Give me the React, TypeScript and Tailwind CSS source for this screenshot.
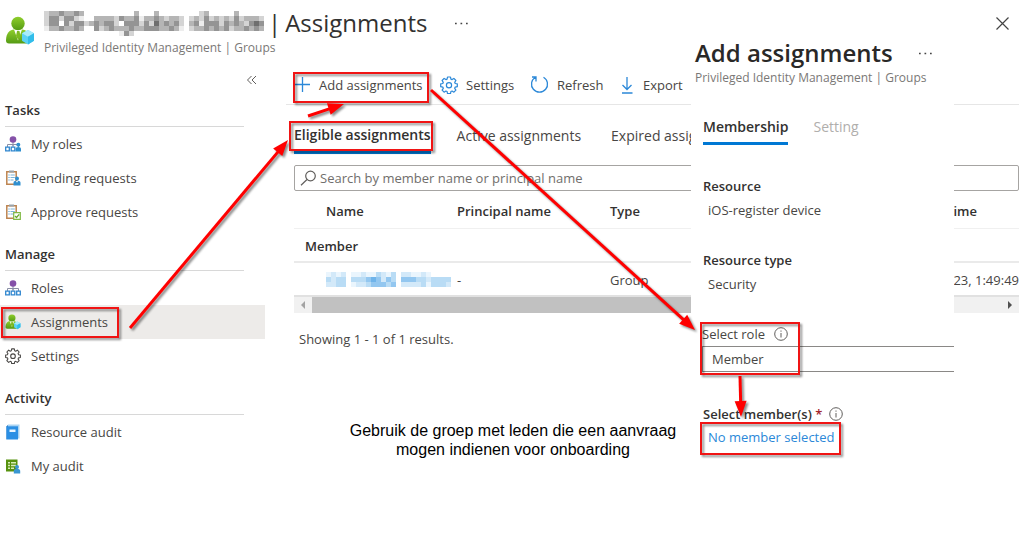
import type { ReactNode } from "react";

const GREYS = ["", "#ededed", "#d4d4d4", "#b5b5b5", "#949494", "#6e6e6e"];
const BLUES = ["", "#eaf5fd", "#d3e9f9", "#b9dcf5", "#93c7f0", "#6fb4ea"];

// One digit per cell, 0 = empty, 5 = darkest
const TITLE_ROWS = [
  "23343343000000000030003000000002300000300000",
  "24424421003333243341334323320232423232423332",
  "24404244234344204442425343420341444243432454",
  "13343343004234333433444334310233434342334343",
  "00000000000000014200000000000000000000000000",
];
const NAME_ROWS = [
  "1212011211321302211210000",
  "3233033345424304443323333",
  "2233012234443402222313332",
];

function Mosaic({ rows, cell, colors, label }: { rows: string[]; cell: number; colors: string[]; label: string }) {
  const width = rows[0].length * cell;
  return (
    <svg width={width} height={rows.length * cell} role="img" aria-label={label} shapeRendering="crispEdges">
      {rows.map((row, y) =>
        row.split("").map((level, x) =>
          level === "0" ? null : (
            <rect key={`${x}-${y}`} x={x * cell} y={y * cell} width={cell} height={cell} fill={colors[Number(level)]} />
          )
        )
      )}
    </svg>
  );
}

function PersonIcon({ size }: { size: number }) {
  return (
    <svg width={size} height={size} viewBox="0 0 30 30">
      <defs>
        <linearGradient id="person" x1="0" y1="0" x2="0" y2="1">
          <stop offset="0" stopColor="#8fce2c" />
          <stop offset="1" stopColor="#559b14" />
        </linearGradient>
      </defs>
      <path d="M1 24.500C1 17 5 13.500 9 13.500h8c4.500 0 8 4 8 11 0 2-1 3-3 3H4c-2 0-3-1-3-3z" fill="url(#person)" />
      <path d="M9 13.500h8l-4 11z" fill="#fff" />
      <path d="M12 15h2.500l1 5-2.200 4-2.300-4z" fill="#7dba20" />
      <circle cx="13" cy="7.500" r="6.700" fill="url(#person)" />
      <path d="M23 14l6 3.200v7.600L23 28.500l-6-3.700v-7.600z" fill="#5bd3f5" />
      <path d="M23 14l6 3.200-6 3.600-6-3.600z" fill="#a8ecfc" />
      <path d="M23 20.800l6-3.600v7.600l-6 3.700z" fill="#32bdea" />
    </svg>
  );
}

function RolesIcon({ person = false }: { person?: boolean }) {
  return (
    <svg width="16" height="16" viewBox="0 0 16 16" fill="none">
      <path d="M8 6v4M2.500 11V8.500h11V11M8 8.500V11" stroke="#8a8fa6" />
      <circle cx="8" cy="3.500" r="3.300" fill="#8551a8" />
      <path d="M.7 11.200h3.600v3.600H.7zM6.200 11.200h3.600v3.600H6.200z" stroke="#2f86cf" strokeWidth="1.300" fill="#fff" />
      {person ? (
        <>
          <circle cx="13.300" cy="8.700" r="2" fill="#2f8fcf" />
          <path d="M10.500 15.500v-2.600c0-1.300 1-2 2.800-2s2.700.7 2.700 2v2.600z" fill="#2f8fcf" />
        </>
      ) : (
        <path d="M11.700 11.200h3.600v3.600h-3.600z" stroke="#2f86cf" strokeWidth="1.300" fill="#fff" />
      )}
    </svg>
  );
}

function ClipboardIcon({ approved = false }: { approved?: boolean }) {
  return (
    <svg width="16" height="16" viewBox="0 0 16 16" fill="none">
      <path d="M1.800 1.700h9.400v12.600H1.800z" fill="#fff" stroke="#bd8450" strokeWidth="1.500" />
      <path d="M4 .5h5v2H4z" fill="#9aa3aa" />
      <path d="M3.500 5h1M3.500 7.500h1M3.500 10h1" stroke="#3c93d0" strokeWidth="1.200" />
      <path d="M5.500 5h4.300M5.500 7.500h4.300M5.500 10h3" stroke="#7db4da" strokeWidth="1.200" />
      {approved ? (
        <>
          <path d="M8.700 8.700h6.600v6.600H8.700z" fill="#fff" stroke="#7fb843" strokeWidth="1.200" />
          <path d="M10 12l1.500 1.500 2.700-3.200" stroke="#6aa82c" strokeWidth="1.300" />
        </>
      ) : (
        <>
          <circle cx="12" cy="8.500" r="2" fill="#2f8fcf" />
          <path d="M8.500 15.500v-2.700c0-1.400 1.200-2 3.500-2s3.500.6 3.500 2v2.700z" fill="#2f8fcf" />
          <path d="M11 11l1 1.800 1-1.800z" fill="#fff" />
        </>
      )}
    </svg>
  );
}

function BookIcon() {
  return (
    <svg width="16" height="16" viewBox="0 0 16 16">
      <path d="M3 .5h11.500v14H3z" fill="#a9d3f2" />
      <path d="M1.500 2.500 3 .7V14l-1.500 1.500z" fill="#1c72bd" />
      <path d="M1.500 2.300h11.500v13.200H1.500z" fill="#2b8fe4" />
      <path d="M4.500 5.500h6V8h-6z" fill="#e9f5ff" />
    </svg>
  );
}

function AuditIcon() {
  return (
    <svg width="16" height="16" viewBox="0 0 16 16">
      <path d="M1 1.500h11.500v12H1z" fill="#57920f" />
      <path d="M3 4h2v1.500H3zM6 4h5v1.500H6zM3 6.800h2v1.500H3zM6 6.800h5v1.500H6zM3 9.600h2v1.500H3zM6 9.600h3v1.500H6z" fill="#d8ecb8" />
      <circle cx="12" cy="9" r="2" fill="#3a96d2" />
      <path d="M8.800 15.500v-2.600c0-1.400 1-2 3.200-2s3.200.6 3.200 2v2.600z" fill="#3a96d2" />
    </svg>
  );
}

function GearIcon({ size }: { size: number }) {
  return (
    <svg width={size} height={size} viewBox="0 0 18 18" fill="none" stroke="currentColor" strokeWidth="1.200" strokeLinejoin="round">
      <path d="M7.500 1h3l.4 2.100 1.200.5 1.800-1.200 2 2.100-1.200 1.800.5 1.200 2.100.4v2.800l-2.100.4-.5 1.200 1.200 1.800-2 2.100-1.800-1.200-1.200.5-.4 2.100h-3l-.4-2.100-1.200-.5-1.800 1.200-2-2.100 1.200-1.800-.5-1.200L.7 10.700V7.900l2.100-.4.5-1.200-1.200-1.800 2-2.100 1.800 1.200 1.200-.5z" />
      <circle cx="9" cy="9.200" r="2.600" />
    </svg>
  );
}

function InfoIcon() {
  return (
    <svg width="14" height="14" viewBox="0 0 14 14" fill="none" stroke="#605e5c">
      <circle cx="7" cy="7" r="6.300" />
      <path d="M7 6v4.500M7 3.500v1.200" />
    </svg>
  );
}

function Dots() {
  return (
    <svg width="13" height="3" viewBox="0 0 13 3" fill="#444">
      <path d="M0 .7h1.700v1.600H0zM5.500.7h1.700v1.600H5.500zM11 .7h1.700v1.600H11z" />
    </svg>
  );
}

function Arrow({ x1, y1, x2, y2 }: { x1: number; y1: number; x2: number; y2: number }) {
  const length = Math.hypot(x2 - x1, y2 - y1);
  const angle = (Math.atan2(y2 - y1, x2 - x1) * 180) / Math.PI;
  return (
    <g transform={`translate(${x1} ${y1}) rotate(${angle})`}>
      <path d={`M0 0H${length - 10}`} stroke="#f00" strokeWidth="3" />
      <path d={`M${length} 0l-16-6v12z`} fill="#f00" />
    </g>
  );
}

function Annotations() {
  return (
    <svg className="absolute top-0 left-0 pointer-events-none" width="1024" height="555" viewBox="0 0 1024 555" aria-hidden="true">
      <g fill="none" className="drop-shadow-[2px_2px_1px_rgba(0,0,0,0.45)]">
        <g stroke="#f01414" strokeWidth="2">
          <rect x="294" y="73" width="134" height="29" />
          <rect x="290" y="122" width="142" height="28" />
          <rect x="2" y="308" width="116" height="29" />
          <rect x="701" y="323" width="98" height="51" />
          <rect x="701" y="423" width="139" height="31" />
        </g>
        <Arrow x1={130} y1={328} x2={288} y2={140} />
        <Arrow x1={308} y1={116} x2={344} y2={104} />
        <Arrow x1={431} y1={90} x2={695} y2={330} />
        <Arrow x1={740} y1={376} x2={741} y2={417} />
      </g>
    </svg>
  );
}

const sections: { title: string; items: { label: string; icon: ReactNode; active?: boolean }[] }[] = [
  {
    title: "Tasks",
    items: [
      { label: "My roles", icon: <RolesIcon person /> },
      { label: "Pending requests", icon: <ClipboardIcon /> },
      { label: "Approve requests", icon: <ClipboardIcon approved /> },
    ],
  },
  {
    title: "Manage",
    items: [
      { label: "Roles", icon: <RolesIcon /> },
      { label: "Assignments", icon: <PersonIcon size={16} />, active: true },
      { label: "Settings", icon: <GearIcon size={16} /> },
    ],
  },
  {
    title: "Activity",
    items: [
      { label: "Resource audit", icon: <BookIcon /> },
      { label: "My audit", icon: <AuditIcon /> },
    ],
  },
];

function Sidebar() {
  return (
    <nav className="w-[265px] shrink-0">
      <div className="flex h-5 items-end justify-end pr-2">
        <button aria-label="Collapse menu" className="text-[#605e5c]">
          <svg width="10" height="10" viewBox="0 0 10 10" fill="none" stroke="currentColor">
            <path d="M4.500 1l-4 4 4 4M9 1L5 5l4 4" />
          </svg>
        </button>
      </div>
      {sections.map((section) => (
        <div key={section.title}>
          <h2 className="mr-[21px] ml-[5px] flex h-[42px] items-center border-b border-[#d8d8d8] pt-2 font-semibold">
            {section.title}
          </h2>
          <ul>
            {section.items.map((item) => (
              <li key={item.label}>
                <a
                  href="#"
                  className={`flex h-[34px] items-center gap-[10px] pl-[5px] text-[#484644] ${item.active ? "bg-[#edebe9]" : ""}`}
                >
                  {item.icon}
                  {item.label}
                </a>
              </li>
            ))}
          </ul>
        </div>
      ))}
    </nav>
  );
}

function Toolbar() {
  return (
    <div className="flex h-10 items-center border-b border-[#e6e6e6] pl-2 whitespace-nowrap text-[#484644]">
      <button className="flex w-[146px] items-center gap-2">
        <svg width="17" height="17" viewBox="0 0 17 17" stroke="#2b88d8" strokeWidth="1.300">
          <path d="M8.500 1v15M1 8.500h15" />
        </svg>
        Add assignments
      </button>
      <button className="flex w-[90px] items-center gap-2">
        <span className="text-[#2b88d8]">
          <GearIcon size={18} />
        </span>
        Settings
      </button>
      <button className="flex w-[90px] items-center gap-2">
        <svg width="19" height="19" viewBox="0 0 19 19" fill="none" stroke="#2b88d8" strokeWidth="1.300">
          <path d="M5.500 2.200a8 8 0 1 0 8 0M2 2h4v4.500" />
        </svg>
        Refresh
      </button>
      <button className="flex items-center gap-2">
        <svg width="15" height="18" viewBox="0 0 15 18" fill="none" stroke="#2b88d8" strokeWidth="1.300">
          <path d="M7 1v12.500M2.500 9L7 13.500 11.500 9M2 17h10.500" />
        </svg>
        Export
      </button>
    </div>
  );
}

function AssignmentsTable() {
  return (
    <div className="overflow-hidden">
      <table className="w-full table-fixed text-left whitespace-nowrap text-[#484644]">
        <colgroup>
          <col className="w-8" />
          <col className="w-[131px]" />
          <col className="w-[153px]" />
          <col className="w-[250px]" />
          <col />
        </colgroup>
        <thead>
          <tr className="h-[37px] border-b border-[#f0f0f0] text-[#323130]">
            <th aria-label="Select" />
            <th className="pt-1 font-semibold">Name</th>
            <th className="pt-1 font-semibold">Principal name</th>
            <th className="pt-1 font-semibold">Type</th>
            <th className="pt-1 pr-[42px] text-right font-semibold">Start time</th>
          </tr>
        </thead>
        <tbody>
          <tr className="h-[34px] border-b-2 border-[#eaeaea] text-[#323130]">
            <th colSpan={5} className="pt-[2px] pl-[11px] font-semibold">Member</th>
          </tr>
          <tr className="h-[33px]">
            <td />
            <td>
              <Mosaic rows={NAME_ROWS} cell={5} colors={BLUES} label="Hidden member name" />
            </td>
            <td className="pt-[2px]">-</td>
            <td className="pt-[2px]">Group</td>
            <td className="pt-[2px] text-right">9/7/2023, 1:49:49</td>
          </tr>
        </tbody>
      </table>
      <div className="flex h-[18px] items-center border-t-2 border-[#e1e1e1] bg-[#f1f1f1]">
        <svg width="18" height="8" viewBox="0 0 18 8" fill="#a3a3a3">
          <path d="M11 0v8L7 4z" />
        </svg>
        <div className="h-full w-[480px] bg-[#c1c1c1]" />
        <svg className="ml-auto" width="18" height="8" viewBox="0 0 18 8" fill="#505050">
          <path d="M7 0v8l4-4z" />
        </svg>
      </div>
    </div>
  );
}

function AddPanel() {
  return (
    <aside className="absolute top-0 bottom-0 left-[691px] w-[263px] overflow-hidden bg-white text-[#323130]">
      <div className="pt-[37px] pl-1">
        <div className="flex h-[33px] items-start justify-between pr-[22px]">
          <h2 className="text-[24px] leading-8 font-semibold text-[#292827]">Add assignments</h2>
          <button aria-label="More panel options" className="flex h-8 items-center">
            <Dots />
          </button>
        </div>
        <p className="text-[12px] leading-4 text-[#7a7876]">Privileged Identity Management | Groups</p>
      </div>
      <div className="mt-6 flex gap-[25px] pl-3 text-[14px]">
        <button className="h-[35px] border-b-[3px] border-[#0078d4] pt-[2px] font-semibold">Membership</button>
        <button className="h-[35px] border-b-[3px] border-transparent pt-[2px] text-[#b0aeac]">Setting</button>
      </div>
      <dl className="pl-3">
        <dt className="mt-[31px] leading-5 font-semibold">Resource</dt>
        <dd className="mt-1 pl-[5px] leading-5 text-[#484644]">iOS-register device</dd>
        <dt className="mt-[30px] leading-5 font-semibold">Resource type</dt>
        <dd className="mt-1 pl-[5px] leading-5 text-[#484644]">Security</dd>
      </dl>
      <div className="mt-[30px] -mr-6 pl-[11px]">
        <div className="flex h-5 items-center gap-[9px]">
          <label htmlFor="role" className="text-[#484644]">Select role</label>
          <InfoIcon />
        </div>
        <select
          id="role"
          className="mt-[2px] block h-[26px] w-full appearance-none border border-[#8a8886] bg-white pl-[9px] text-[#484644]"
        >
          <option>Member</option>
        </select>
      </div>
      <div className="mt-8 pl-3">
        <div className="flex h-5 items-center gap-[7px] font-semibold">
          <span>
            Select member(s) <span className="text-[#a4262c]">*</span>
          </span>
          <InfoIcon />
        </div>
        <a href="#" className="mt-[3px] block pl-[5px] leading-5 text-[#2b88d8]">No member selected</a>
      </div>
    </aside>
  );
}

export default function App() {
  return (
    <div className="relative min-h-screen overflow-hidden bg-white font-['Open_Sans',sans-serif] text-[13px] leading-5 text-[#323130]">
      <header className="flex h-[65px] items-start gap-[9px] pt-[7px] pl-[5px]">
        <div className="pt-[9px]">
          <PersonIcon size={30} />
        </div>
        <div>
          <div className="flex h-[33px] items-start">
            <h1 className="flex h-8 items-center gap-1 text-[24px] leading-8 text-[#323130]">
              <Mosaic rows={TITLE_ROWS} cell={5} colors={GREYS} label="Hidden group name" />
              <span>|</span>
              <span>Assignments</span>
            </h1>
            <button aria-label="More options" className="ml-7 flex h-8 items-center">
              <Dots />
            </button>
          </div>
          <p className="text-[12px] leading-4 text-[#7a7876]">Privileged Identity Management | Groups</p>
        </div>
      </header>

      <div className="flex">
        <Sidebar />
        <main className="ml-[21px] min-w-0 flex-1 pr-[5px]">
          <Toolbar />
          <div className="flex h-[49px] items-start gap-[26px] pt-[13px] pl-2 text-[14px] whitespace-nowrap text-[#484644]">
            <button className="h-9 border-b-[3px] border-[#0078d4] font-semibold text-[#323130]">Eligible assignments</button>
            <button className="h-9">Active assignments</button>
            <button className="ml-1 h-9">Expired assignments</button>
          </div>
          <div className="mt-[11px] pl-2">
            <div className="flex h-[26px] items-center gap-[3px] rounded-[2px] border border-[#a6a4a2] pl-[5px]">
              <svg width="17" height="16" viewBox="0 0 17 16" fill="none" stroke="#605e5c" strokeWidth="1.200">
                <circle cx="10.500" cy="6" r="4.800" />
                <path d="M7 9.500L1 15.200" />
              </svg>
              <input
                type="text"
                aria-label="Search"
                placeholder="Search by member name or principal name"
                className="min-w-0 flex-1 outline-none placeholder:text-[#706e6c]"
              />
            </div>
            <AssignmentsTable />
            <p className="mt-4 pl-[5px] text-[#484644]">Showing 1 - 1 of 1 results.</p>
          </div>
          <p className="mt-[72px] w-[454px] text-center font-['Liberation_Sans',Arial,sans-serif] text-[16px] leading-[19px] text-black">
            Gebruik de groep met leden die een aanvraag
            <br />
            mogen indienen voor onboarding
          </p>
        </main>
      </div>

      <AddPanel />
      <button aria-label="Close" className="absolute top-[17px] right-[15px]">
        <svg width="13" height="13" viewBox="0 0 13 13" stroke="#444" strokeWidth="1.200">
          <path d="M.5.5l12 12M12.500.5l-12 12" />
        </svg>
      </button>
      <Annotations />
    </div>
  );
}
